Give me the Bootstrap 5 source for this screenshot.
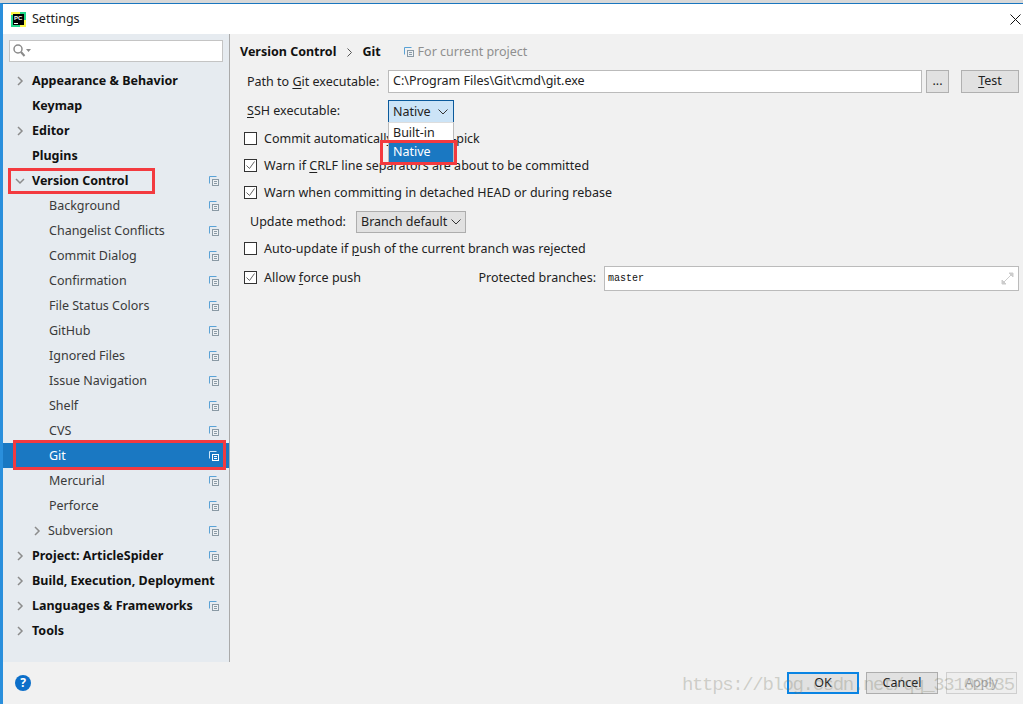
<!doctype html>
<html><head><meta charset="utf-8"><title>Settings</title>
<link href="https://cdn.jsdelivr.net/npm/bootstrap@5.3.0/dist/css/bootstrap.min.css" rel="stylesheet">
<style>
html,body{height:704px;overflow:hidden;margin:0}
body{font:12.5px/18px "Noto Sans",sans-serif;color:#222;background:#d8d8d8;padding-top:3px}
.win{height:701px;background:#f1f1f1;border-top:1px solid #1a76bf;border-left:3px solid #2a8fdc;position:relative}
.tbar{height:30px;background:#fff;padding:0 0 0 8px;gap:6px}
.cls{margin-right:2px}
.main{height:628px}
.side{width:227px;background:#e6ebf0;border-right:1px solid #aaa;flex:none}
.srch{margin:6px;height:22px;background:#fff;border:1px solid #c4c4c4;padding-left:3px}
.trow{height:25px;padding-right:10px;color:#3a3a3a;white-space:nowrap}
.trow.top{font-weight:700;color:#111}
.trow .arr{width:14px;flex:none;margin-left:10px;margin-right:5px}
.trow.sub{padding-left:46px}
.trow.sub2{padding-left:27px}
.trow.sub2 .arr{margin-left:0;margin-right:4px}
.trow.sel{background:#1a78c2;color:#fff}
.sp{flex:1}
.panel{flex:1;padding:7px 4px 0 10px;min-width:0}
.crumb{height:22px;font-weight:700;color:#111;margin-bottom:7px}
.crumb .chev{margin:0 10px 0 11px}
.crumb .proj{font-weight:400;color:#8f8f8f;margin-left:23px}
.frow{height:23px}
.lab{margin-left:7px;width:141px;flex:none}
.lab2{margin-top:5px}
.tinp{flex:1;height:23px;background:#fff;border:1px solid #bbb;padding:0 0 2px 4px}
.sbtn{height:23px;border:1px solid #b0b0b0;background:#e1e1e1;text-align:center;line-height:20px}
.sbtn1{width:23px;margin-left:4px}
.sbtn2{width:58px;margin-left:12px}
.sq{width:13px;height:13px;border:1px solid #333;background:#fff;flex:none;margin:0 7px 0 4px;display:flex;align-items:center;justify-content:center}
.cbr{height:27px}
.cbr1{margin-top:2px}
.ssh{height:30px}
.upd{height:29px;padding-top:2px}
.updl{margin-left:10px;width:106px;flex:none}
.allow{height:31px}
.combo{height:23px;width:66px;border:1px solid #0b5a9c;background:#cce4f7;padding:0 5px 0 4px;margin-top:7px}
.combo2{height:22px;width:110px;border:1px solid #adadad;background:#e1e1e1;padding:0 4px}
.popup{position:absolute;left:385px;top:118px;width:66px;height:41px;background:#fff;border:1px solid #bbb;border-top-color:#ddd;z-index:3}
.popup div{height:20px;padding-left:4px;line-height:18px}
.popup .bi{padding-top:1px}
.popup .on{background:#1a78c2;color:#fff}
.rbox{position:absolute;border:3px solid #f33a3f;z-index:5}
.rb1{left:5px;top:164px;width:147px;height:26px}
.rb2{left:10px;top:436px;width:213px;height:30px}
.rb3{left:377px;top:136px;width:77px;height:25px}
.mono{font:10px/14px "Liberation Mono",monospace;color:#111}
.prot{margin-top:1px}
.pinp{width:415px;height:25px;background:#fff;border:1px solid #bbb;padding-left:3px;margin-top:2px}
.foot{height:42px;background:#f1f1f1;padding:0 6px 0 12px}
.help{width:16px;height:16px;border-radius:50%;background:#0c6fc9;color:#fff;font:700 12px/16px "Noto Sans",sans-serif;text-align:center}
.fbtn{height:22px;width:72px;border:1px solid #adadad;background:#e1e1e1;text-align:center;line-height:20px;margin-left:7px}
.fbtn.ok{border:2px solid #0a84e3;line-height:18px;margin-left:0}
.fbtn.dis{color:#a5a5a5;border-color:#cfcfcf;background:#eee;margin-left:8px;width:71px}
.wm{position:absolute;left:682px;top:673px;font:19px/24px "Liberation Mono",monospace;letter-spacing:-1.35px;color:rgba(120,120,100,.3);z-index:6;white-space:nowrap}
u{text-underline-offset:2px}
</style></head><body>
<div class="win">
<div class="tbar d-flex align-items-center">
<svg width="15" height="15" viewBox="0 0 15 15"><rect width="15" height="15" fill="#21d789"/><path d="M0 0h9v3H0z" fill="#fcf84a"/><path d="M11 8h4v7h-6v-2z" fill="#fcf84a"/><rect x="2" y="2" width="11" height="11" fill="#000"/><rect x="3" y="11" width="4" height="1" fill="#fff"/><text x="3" y="8" font-size="6" font-weight="700" fill="#fff" font-family="Liberation Sans">PC</text></svg>
<span>Settings</span><span class="sp"></span>
<svg class="cls" width="11" height="11" viewBox="0 0 11 11"><path d="M.5.5l10 10M10.500.5l-10 10" stroke="#111" fill="none"/></svg>
</div>
<div class="main d-flex">
<div class="side">
<div class="srch d-flex align-items-center"><svg width="19" height="16" viewBox="0 0 19 16"><circle cx="5" cy="6" r="4" fill="none" stroke="#8a8a8a" stroke-width="1.500"/><path d="M8 9l3.500 4" stroke="#8a8a8a" stroke-width="2"/><path d="M13 6h5l-2.500 3z" fill="#8a8a8a"/></svg></div>
<div>
<div class="trow top d-flex align-items-center"><svg class="arr" width="14" height="10" viewBox="0 0 14 10"><path d="M5 1l4 4-4 4" fill="none" stroke="#8c8c8c" stroke-width="1.500"/></svg>Appearance &amp; Behavior</div>
<div class="trow top d-flex align-items-center"><span class="arr"></span>Keymap</div>
<div class="trow top d-flex align-items-center"><svg class="arr" width="14" height="10" viewBox="0 0 14 10"><path d="M5 1l4 4-4 4" fill="none" stroke="#8c8c8c" stroke-width="1.500"/></svg>Editor</div>
<div class="trow top d-flex align-items-center"><span class="arr"></span>Plugins</div>
<div class="trow top d-flex align-items-center"><svg class="arr" width="14" height="10" viewBox="0 0 14 10"><path d="M3 3l4 4 4-4" fill="none" stroke="#8c8c8c" stroke-width="1.500"/></svg>Version Control<span class="sp"></span><svg width="10" height="10"><use href="#cp"/></svg></div>
<div class="trow sub d-flex align-items-center">Background<span class="sp"></span><svg width="10" height="10"><use href="#cp"/></svg></div>
<div class="trow sub d-flex align-items-center">Changelist Conflicts<span class="sp"></span><svg width="10" height="10"><use href="#cp"/></svg></div>
<div class="trow sub d-flex align-items-center">Commit Dialog<span class="sp"></span><svg width="10" height="10"><use href="#cp"/></svg></div>
<div class="trow sub d-flex align-items-center">Confirmation<span class="sp"></span><svg width="10" height="10"><use href="#cp"/></svg></div>
<div class="trow sub d-flex align-items-center">File Status Colors<span class="sp"></span><svg width="10" height="10"><use href="#cp"/></svg></div>
<div class="trow sub d-flex align-items-center">GitHub<span class="sp"></span><svg width="10" height="10"><use href="#cp"/></svg></div>
<div class="trow sub d-flex align-items-center">Ignored Files<span class="sp"></span><svg width="10" height="10"><use href="#cp"/></svg></div>
<div class="trow sub d-flex align-items-center">Issue Navigation<span class="sp"></span><svg width="10" height="10"><use href="#cp"/></svg></div>
<div class="trow sub d-flex align-items-center">Shelf<span class="sp"></span><svg width="10" height="10"><use href="#cp"/></svg></div>
<div class="trow sub d-flex align-items-center">CVS<span class="sp"></span><svg width="10" height="10"><use href="#cp"/></svg></div>
<div class="trow sub sel d-flex align-items-center">Git<span class="sp"></span><svg width="10" height="10"><use href="#cpw"/></svg></div>
<div class="trow sub d-flex align-items-center">Mercurial<span class="sp"></span><svg width="10" height="10"><use href="#cp"/></svg></div>
<div class="trow sub d-flex align-items-center">Perforce<span class="sp"></span><svg width="10" height="10"><use href="#cp"/></svg></div>
<div class="trow sub2 d-flex align-items-center"><svg class="arr" width="14" height="10" viewBox="0 0 14 10"><path d="M5 1l4 4-4 4" fill="none" stroke="#8c8c8c" stroke-width="1.500"/></svg>Subversion<span class="sp"></span><svg width="10" height="10"><use href="#cp"/></svg></div>
<div class="trow top d-flex align-items-center"><svg class="arr" width="14" height="10" viewBox="0 0 14 10"><path d="M5 1l4 4-4 4" fill="none" stroke="#8c8c8c" stroke-width="1.500"/></svg>Project: ArticleSpider<span class="sp"></span><svg width="10" height="10"><use href="#cp"/></svg></div>
<div class="trow top d-flex align-items-center"><svg class="arr" width="14" height="10" viewBox="0 0 14 10"><path d="M5 1l4 4-4 4" fill="none" stroke="#8c8c8c" stroke-width="1.500"/></svg>Build, Execution, Deployment</div>
<div class="trow top d-flex align-items-center"><svg class="arr" width="14" height="10" viewBox="0 0 14 10"><path d="M5 1l4 4-4 4" fill="none" stroke="#8c8c8c" stroke-width="1.500"/></svg>Languages &amp; Frameworks<span class="sp"></span><svg width="10" height="10"><use href="#cp"/></svg></div>
<div class="trow top d-flex align-items-center"><svg class="arr" width="14" height="10" viewBox="0 0 14 10"><path d="M5 1l4 4-4 4" fill="none" stroke="#8c8c8c" stroke-width="1.500"/></svg>Tools</div>
</div>
</div>
<div class="panel">
<div class="crumb d-flex align-items-center">Version Control<svg class="chev" width="5" height="9" viewBox="0 0 5 9"><path d="M.5.5l4 4-4 4" fill="none" stroke="#555"/></svg>Git<span class="proj d-flex align-items-center gap-1"><svg width="10" height="10"><use href="#cp"/></svg>For current project</span></div>
<div class="frow d-flex align-items-center"><span class="lab">Path to <u>G</u>it executable:</span><div class="tinp d-flex align-items-center">C:\Program Files\Git\cmd\git.exe</div><div class="sbtn sbtn1">...</div><div class="sbtn sbtn2"><u>T</u>est</div></div>
<div class="ssh d-flex align-items-center"><span class="lab lab2"><u>S</u>SH executable:</span><div class="combo d-flex align-items-center justify-content-between">Native<svg width="10" height="6" viewBox="0 0 10 6"><path d="M.5.500l4.500 4.500 4.500-4.500" fill="none" stroke="#333"/></svg></div></div>
<div class="cbr cbr1 d-flex align-items-center"><span class="sq"></span><span>Commit automatically on cherry-pick</span></div>
<div class="cbr d-flex align-items-center"><span class="sq"><svg width="11" height="11" viewBox="0 0 11 11"><path d="M1.500 5.500l3 3 5-7" fill="none" stroke="#666"/></svg></span><span>Warn if <u>C</u>RLF line separators are about to be committed</span></div>
<div class="cbr d-flex align-items-center"><span class="sq"><svg width="11" height="11" viewBox="0 0 11 11"><path d="M1.500 5.500l3 3 5-7" fill="none" stroke="#666"/></svg></span><span>Warn when committing in detached HEAD or during rebase</span></div>
<div class="upd d-flex align-items-center"><span class="updl">Update method:</span><div class="combo2 d-flex align-items-center justify-content-between">Branch default<svg width="10" height="6" viewBox="0 0 10 6"><path d="M.5.500l4.500 4.500 4.500-4.500" fill="none" stroke="#333"/></svg></div></div>
<div class="cbr d-flex align-items-center"><span class="sq"></span><span>Auto-update if <u>p</u>ush of the current branch was rejected</span></div>
<div class="allow d-flex align-items-center"><span class="sq"><svg width="11" height="11" viewBox="0 0 11 11"><path d="M1.500 5.500l3 3 5-7" fill="none" stroke="#666"/></svg></span><span>Allow <u>f</u>orce push</span><span class="prot ms-auto me-2">Protected branches:</span><div class="pinp d-flex align-items-center justify-content-between"><span class="mono">master</span><svg class="me-1" width="13" height="13" viewBox="0 0 13 13"><path d="M8 1h4v4zM1 8v4h4zM10 3L3 10" fill="#ccc" stroke="#ccc"/></svg></div></div>
</div>
</div>
<div class="foot d-flex align-items-center"><div class="help">?</div><span class="sp"></span><div class="fbtn ok">OK</div><div class="fbtn">Cancel</div><div class="fbtn dis">Apply</div></div>
<div class="popup"><div class="bi">Built-in</div><div class="on">Native</div></div>
<div class="rbox rb1"></div><div class="rbox rb2"></div><div class="rbox rb3"></div>
</div>
<div class="wm">https://blog.csdn.net/qq_33102635</div>
<svg width="0" height="0" class="position-absolute"><defs>
<g id="cp"><path d="M.5 7.500V.500h7" fill="none" stroke="#5aa2d6"/><rect x="3.500" y="3.500" width="6" height="6" fill="#eef1f4" stroke="#8a9aa5"/><path d="M5 5.500h3M5 7.500h3" stroke="#8a9aa5"/></g>
<g id="cpw"><path d="M.5 7.500V.500h7" fill="none" stroke="#cfe6f7"/><rect x="3.500" y="3.500" width="6" height="6" fill="none" stroke="#fff"/><path d="M5 5.500h3M5 7.500h3" stroke="#fff"/></g>
</defs></svg>
</body></html>
